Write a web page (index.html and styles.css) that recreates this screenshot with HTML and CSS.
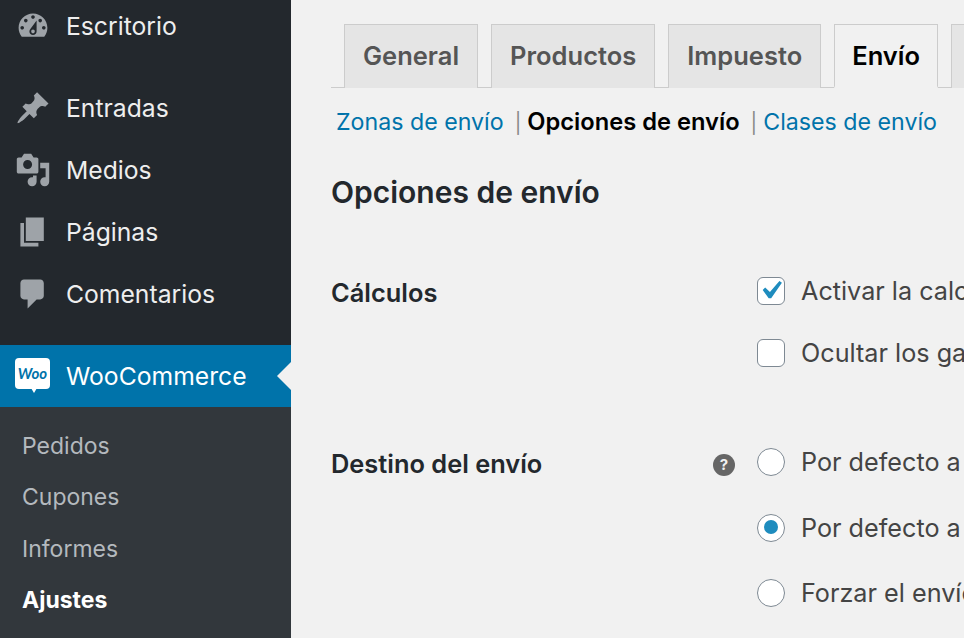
FILE: index.html
```html
<!doctype html>
<html>
    <head>
        <meta charset="utf-8">
        <title>Opciones de envío</title>
        <link rel="stylesheet" href="styles.css">
    </head>
    <body>
        <div id="sidebar">
            <ul class="menu">
                <li class="item sep">
                    <svg class="icon" viewBox="0 0 20 20"><path d="M3.76 16h12.48c1.1-1.37 1.76-3.11 1.76-5 0-4.42-3.58-8-8-8s-8 3.58-8 8c0 1.89.66 3.63 1.76 5zM10 4c.55 0 1 .45 1 1s-.45 1-1 1-1-.45-1-1 .45-1 1-1zM6 6c.55 0 1 .45 1 1s-.45 1-1 1-1-.45-1-1 .45-1 1-1zm8 0c.55 0 1 .45 1 1s-.45 1-1 1-1-.45-1-1 .45-1 1-1zm-5.37 5.55L12 7v6c0 1.1-.9 2-2 2s-2-.9-2-2c0-.57.24-1.08.63-1.45zM4 10c.55 0 1 .45 1 1s-.45 1-1 1-1-.45-1-1 .45-1 1-1zm12 0c.55 0 1 .45 1 1s-.45 1-1 1-1-.45-1-1 .45-1 1-1zm-5 3c0-.55-.45-1-1-1s-1 .45-1 1 .45 1 1 1 1-.45 1-1z"/></svg>
                    Escritorio
                </li>
                <li class="item">
                    <svg class="icon" viewBox="0 0 20 20"><path d="M10.44 3.02l1.82-1.82 6.36 6.35-1.83 1.82c-1.05-.68-2.48-.57-3.41.36l-.75.75c-.92.93-1.04 2.35-.35 3.41l-1.83 1.82-2.41-2.41-2.8 2.79c-.42.42-3.38 2.71-3.8 2.29s1.86-3.39 2.28-3.81l2.79-2.79L4.1 9.36l1.83-1.82c1.05.69 2.48.57 3.4-.36l.75-.75c.93-.92 1.05-2.35.36-3.41z"/></svg>
                    Entradas
                </li>
                <li class="item">
                    <svg class="icon" viewBox="0 0 20 20"><path d="M13 11V4c0-.55-.45-1-1-1h-1.67L9 1H5L3.67 3H2c-.55 0-1 .45-1 1v7c0 .55.45 1 1 1h10c.55 0 1-.45 1-1zM7 4.5c1.38 0 2.5 1.12 2.5 2.5S8.38 9.5 7 9.5 4.5 8.38 4.5 7 5.62 4.5 7 4.5zM14 6h5v10.5c0 1.38-1.12 2.5-2.5 2.5S14 17.88 14 16.5s1.12-2.5 2.5-2.5c.17 0 .34.02.5.05V9h-3V6zm-4 8.05V13h2v3.5c0 1.38-1.12 2.5-2.5 2.5S7 17.88 7 16.5 8.12 14 9.5 14c.17 0 .34.02.5.05z"/></svg>
                    Medios
                </li>
                <li class="item">
                    <svg class="icon" viewBox="0 0 20 20"><path d="M6 15V2h10v13H6zm-1 1h8v2H3V5h2v11z"/></svg>
                    Páginas
                </li>
                <li class="item sep">
                    <svg class="icon" viewBox="0 0 20 20"><path d="M5 2h9c1.1 0 2 .9 2 2v7c0 1.1-.9 2-2 2h-2l-5 5v-5H5c-1.1 0-2-.9-2-2V4c0-1.1.9-2 2-2z"/></svg>
                    Comentarios
                </li>
                <li class="item current">
                    <span class="woo"><span class="woo-text">Woo</span></span>
                    WooCommerce
                    <span class="arrow"></span>
                </li>
            </ul>
            <ul class="submenu">
                <li>Pedidos</li>
                <li>Cupones</li>
                <li>Informes</li>
                <li class="active">Ajustes</li>
            </ul>
        </div>
        <div id="content">
            <div class="tabs">
                <a class="tab">General</a>
                <a class="tab">Productos</a>
                <a class="tab">Impuesto</a>
                <a class="tab tab-active">Envío</a>
                <a class="tab">Pagos</a>
            </div>
            <div class="subsub">
                <a>Zonas de envío</a>
                <span class="pipe">|</span>
                <strong>Opciones de envío</strong>
                <span class="pipe">|</span>
                <a>Clases de envío</a>
            </div>
            <h2>Opciones de envío</h2>
            <div class="row row-calc">
                <div class="label">Cálculos</div>
                <div class="help"></div>
                <div class="fields">
                    <div class="field">
                        <span class="check"><svg viewBox="0 0 20 20"><path d="M14.83 4.89l1.34.94-5.81 8.38H9.02L5.78 9.67l1.34-1.25 2.57 2.4z"/></svg></span>
                        Activar la calculadora de envío en la página del carrito
                    </div>
                    <div class="field">
                        <span class="check"></span>
                        Ocultar los gastos de envío hasta que se introduzca una dirección
                    </div>
                </div>
            </div>
            <div class="row row-dest">
                <div class="label">Destino del envío</div>
                <div class="help"><span class="help-tip">?</span></div>
                <div class="fields fields-radio">
                    <div class="field">
                        <span class="radio"></span>
                        Por defecto a la dirección de envío del cliente
                    </div>
                    <div class="field">
                        <span class="radio radio-on"></span>
                        Por defecto a la dirección de facturación del cliente
                    </div>
                    <div class="field">
                        <span class="radio"></span>
                        Forzar el envío a la dirección de facturación del cliente
                    </div>
                </div>
            </div>
        </div>
    </body>
</html>
```

FILE: styles.css
```css
* {
    margin: 0;
    padding: 0;
    box-sizing: border-box;
}
html, body {
    height: 100%;
    overflow: hidden;
}
body {
    display: flex;
    background-color: #f1f1f1;
    font-family: Inter, "Noto Sans", sans-serif;
    font-size: 25.2px;
    color: #444;
}
ul {
    list-style: none;
}

/* Sidebar */
#sidebar {
    flex: 0 0 291px;
    height: 100%;
    background-color: #23282d;
    color: #eee;
    overflow: hidden;
    font-size: 24.7px;
}
.menu {
    margin-top: -5px;
}
.item {
    position: relative;
    display: flex;
    align-items: center;
    height: 62px;
    padding-left: 66px;
}
.sep {
    margin-bottom: 20px;
}
.icon {
    position: absolute;
    left: 15px;
    top: 13px;
    width: 36px;
    height: 36px;
    fill: #9ea3a8;
}
.current {
    background-color: #0073aa;
    color: #fff;
}
.woo {
    position: absolute;
    left: 15px;
    top: 13px;
    width: 35px;
    height: 31px;
    background-color: #fff;
    border-radius: 4px;
    color: #0073aa;
    text-align: center;
}
.woo::after {
    content: "";
    position: absolute;
    left: 16px;
    top: 30px;
    border-top: 5px solid #fff;
    border-left: 3px solid transparent;
    border-right: 3px solid transparent;
}
.woo-text {
    display: block;
    font-family: Lato, sans-serif;
    font-size: 15px;
    font-weight: 700;
    font-style: italic;
    line-height: 30px;
}
.arrow {
    position: absolute;
    right: 0;
    top: 17px;
    border-top: 14px solid transparent;
    border-bottom: 14px solid transparent;
    border-right: 14px solid #f1f1f1;
}
.submenu {
    background-color: #32373c;
    height: 240px;
    padding-top: 14px;
    padding-left: 22px;
    color: #b4b9be;
    font-size: 23px;
}
.submenu li {
    height: 51.3px;
    line-height: 51.3px;
}
.submenu .active {
    color: #fff;
    font-weight: 700;
}

/* Content */
#content {
    flex: 1;
    min-width: 0;
    padding-left: 40px;
    white-space: nowrap;
}
.tabs {
    display: flex;
    gap: 13px;
    height: 64px;
    margin-top: 24px;
    padding-left: 13px;
    border-bottom: 1.5px solid #ccc;
}
.tab {
    flex: none;
    height: 64px;
    padding: 0 18px;
    line-height: 62px;
    background-color: #e5e5e5;
    border: 1.5px solid #ccc;
    border-bottom: none;
    color: #555;
    font-size: 25.5px;
    font-weight: 600;
}
.tab-active {
    padding: 0 17px;
    background-color: #f1f1f1;
    border-bottom: 2px solid #f1f1f1;
    color: #000;
}
.subsub {
    display: flex;
    align-items: baseline;
    height: 40px;
    margin-top: 14px;
    padding-left: 5px;
    line-height: 40px;
    color: #666;
    font-size: 23.2px;
}
.subsub a {
    color: #0073aa;
}
.subsub strong {
    color: #000;
    font-weight: 600;
    font-size: 23.7px;
}
.pipe {
    margin: 0 6px 0 11px;
    color: #888;
    font-size: 20px;
}
h2 {
    margin-top: 32px;
    font-size: 30px;
    font-weight: 600;
    line-height: 36px;
    color: #23282d;
}
.row {
    display: flex;
}
.row-calc {
    margin-top: 66.5px;
}
.row-dest {
    margin-top: 81.5px;
}
.label {
    flex: 0 0 382px;
    font-size: 25.4px;
    font-weight: 600;
    color: #23282d;
    line-height: 31px;
}
.help {
    flex: 0 0 44px;
    padding-top: 6px;
}
.help-tip {
    display: block;
    width: 22px;
    height: 22px;
    border-radius: 50%;
    background-color: #666;
    color: #f1f1f1;
    font-size: 15px;
    font-weight: 700;
    line-height: 22px;
    text-align: center;
}
.fields {
    display: flex;
    flex-direction: column;
    gap: 34px;
}
.fields-radio {
    gap: 37.5px;
}
.field {
    display: flex;
    align-items: center;
    gap: 16px;
    height: 28px;
}
.check, .radio {
    flex: none;
    width: 28px;
    height: 28px;
    background-color: #fff;
    border: 1.5px solid #7e8993;
}
.check {
    border-radius: 6px;
}
.check svg {
    display: block;
    width: 37px;
    height: 37px;
    margin: -6px;
    fill: #1e8cbe;
}
.radio {
    border-radius: 50%;
}
.radio-on::before {
    content: "";
    display: block;
    width: 14px;
    height: 14px;
    margin: 5.5px;
    border-radius: 50%;
    background-color: #1e8cbe;
}
```
